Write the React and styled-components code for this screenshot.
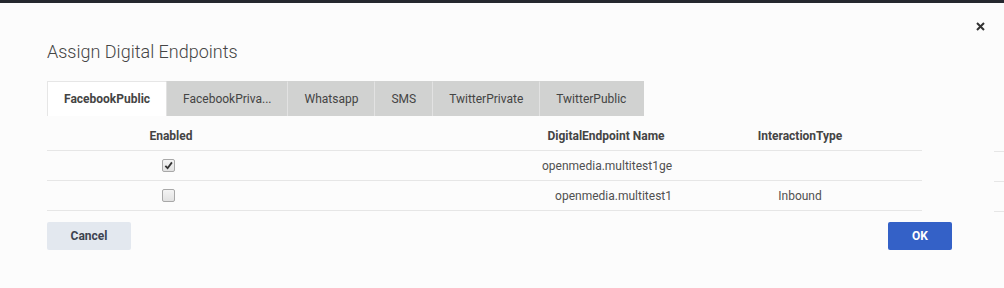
import React from 'react'
import styled, { createGlobalStyle } from 'styled-components'

const Global = createGlobalStyle`
body {
  margin: 0;
  background: #fcfcfc;
  font-family: Roboto, "Liberation Sans", sans-serif;
  color: #444;
}
`;

const TopBar = styled.div`
height: 3px;
background: #25282e;
`;

const Modal = styled.div`
position: relative;
padding: 0 0 0 47px;
height: 285px;
`;

const Close = styled.button`
position: absolute;
top: 15px;
right: 16px;
width: 16px;
height: 16px;
padding: 0;
border: none;
background: none;
display: flex;
align-items: center;
justify-content: center;
cursor: pointer;
`;

const Title = styled.h2`
margin: 0;
padding-top: 37px;
font-size: 18px;
font-weight: 300;
line-height: 24px;
color: #454545;
`;

const Tabs = styled.div`
display: flex;
margin-top: 17px;
height: 35px;
`;

const Tab = styled.div`
height: 35px;
box-sizing: border-box;
padding: 0 16px;
display: flex;
align-items: center;
font-size: 12px;
font-weight: ${p => (p.active ? 700 : 400)};
color: #444;
background: ${p => (p.active ? '#fff' : '#d1d2d1')};
border-left: 1px solid ${p => (p.active ? '#e6e6e6' : '#e2e2e2')};
border-top: 1px solid ${p => (p.active ? '#e6e6e6' : '#d1d2d1')};
&:last-child { padding-right: 18px; }
`;

const TableWrap = styled.div`
display: flex;
`;

const Table = styled.div`
width: 875px;
`;

const Stub = styled.div`
margin-left: 72px;
flex: 1;
padding-top: 35px;
`;

const StubLine = styled.div`
height: 29px;
border-bottom: 1px solid #e6e6e6;
&:first-child { height: 0; }
`;

const Row = styled.div`
display: grid;
grid-template-columns: 248px 195px 232px 156px 44px;
height: ${p => (p.head ? 34 : 29)}px;
border-bottom: 1px solid #e6e6e6;
align-items: center;
font-size: 12px;
`;

const HeadCell = styled.div`
text-align: center;
font-weight: 700;
color: #444;
padding-top: 6px;
`;

const Cell = styled.div`
padding-right: ${p => p.pr || 0}px;
color: #505050;
display: flex;
justify-content: ${p => (p.align === 'right' ? 'flex-end' : 'center')};
`;

const Box = styled.span`
width: 11px;
height: 11px;
border: 1px solid #a8a8a8;
border-radius: 2px;
background: linear-gradient(#f4f4f4, #e2e2e2);
display: flex;
align-items: center;
justify-content: center;
`;

const Footer = styled.div`
display: flex;
justify-content: space-between;
width: 905px;
margin-top: 10px;
`;

const Button = styled.button`
height: 28px;
width: ${p => p.w}px;
border: none;
border-radius: 2px;
font-family: Roboto, "Liberation Sans", sans-serif;
font-size: 12px;
font-weight: 700;
color: ${p => (p.primary ? '#fff' : '#3d4350')};
background: ${p => (p.primary ? '#3461c7' : '#e3e8ef')};
cursor: pointer;
`;

const Check = ({ checked }) => (
  <Box>
    {checked && (
      <svg width="9" height="9" viewBox="0 0 10 10">
        <path d="M1.5 5.5 L4 8 L8.8 1.5" fill="none" stroke="#333" strokeWidth="2" />
      </svg>
    )}
  </Box>
);

const tabs = ['FacebookPublic', 'FacebookPriva...', 'Whatsapp', 'SMS', 'TwitterPrivate', 'TwitterPublic'];

const rows = [
  { checked: true, name: 'openmedia.multitest1ge', type: '' },
  { checked: false, name: 'openmedia.multitest1', type: 'Inbound' },
];

const App = () => {
  return (
    <>
      <Global />
      <TopBar />
      <Modal>
        <Close aria-label="close">
          <svg width="9" height="9" viewBox="0 0 9 9">
            <path d="M1 1 L8 8 M8 1 L1 8" stroke="#333" strokeWidth="2" />
          </svg>
        </Close>
        <Title>Assign Digital Endpoints</Title>
        <Tabs>
          {tabs.map((t, i) => (
            <Tab key={t} active={i === 0}>{t}</Tab>
          ))}
        </Tabs>
        <TableWrap>
          <Table>
            <Row head>
              <HeadCell>Enabled</HeadCell>
              <HeadCell />
              <HeadCell>DigitalEndpoint Name</HeadCell>
              <HeadCell>InteractionType</HeadCell>
              <HeadCell />
            </Row>
            {rows.map(r => (
              <Row key={r.name}>
                <Cell pr={6}><Check checked={r.checked} /></Cell>
                <Cell />
                <Cell align="right" pr={50}>{r.name}</Cell>
                <Cell>{r.type}</Cell>
                <Cell />
              </Row>
            ))}
          </Table>
          <Stub>
            <StubLine />
            <StubLine />
            <StubLine />
          </Stub>
        </TableWrap>
        <Footer>
          <Button w={84}>Cancel</Button>
          <Button w={64} primary>OK</Button>
        </Footer>
      </Modal>
    </>
  )
}

export default App
